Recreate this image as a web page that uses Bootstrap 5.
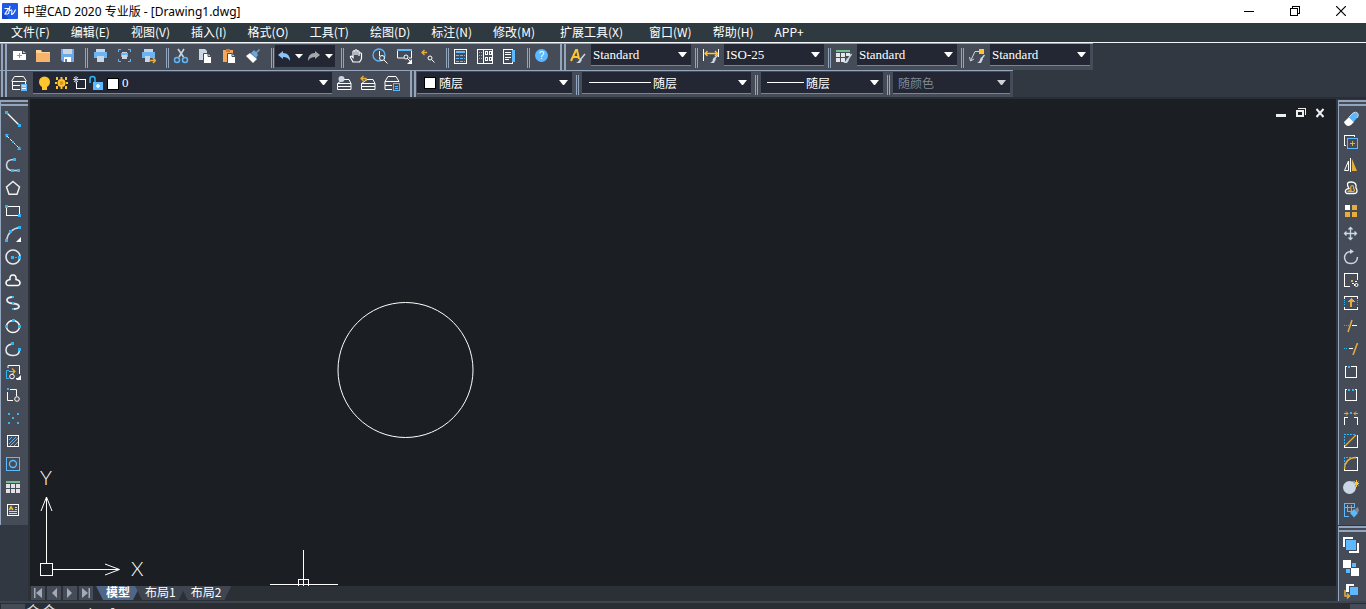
<!DOCTYPE html>
<html lang="zh-CN">
<head>
<meta charset="utf-8">
<meta name="viewport" content="width=device-width, initial-scale=1">
<title>中望CAD 2020 专业版 - [Drawing1.dwg]</title>
<link href="https://cdn.jsdelivr.net/npm/bootstrap@5.3.0/dist/css/bootstrap.min.css" rel="stylesheet">
<style>
:root{--panel:#454c57;--shell:#323842;--canvas:#1b1e22;--field:#222733;--rule:#93a5bd;--blue:#33b5f5;--sky:#5cb8ff;--gold:#e8ae3c}
body{font-family:"Noto Sans","Noto Sans CJK SC",sans-serif;font-size:12px;line-height:16px;background:var(--shell);color:#fff}
svg{display:block;flex:none;fill:none}
button{border:0;padding:0;background:none;color:inherit}
.titlebar{height:23px;background:#fff;color:#000;padding:0 2px}
.titlebar h1{font-size:12px;line-height:24px}
.logo{margin:3px 1px 0 0}
.win-btn{width:46px;height:21px;display:flex;align-items:center;justify-content:center}
.menubar{height:20px;background:#2f3940;border-bottom:1px solid #f2f5f7}
.menubar .nav-link{color:#fff;padding:0 10px 0 11px;line-height:18px;font-family:"Noto Sans CJK SC",sans-serif;white-space:nowrap}
.menubar .nav-wide{padding:0 15px}
.dock{height:56px;border-bottom:2px solid #282d36}
.strip{height:27px;background:var(--panel);border-top:1px solid var(--rule);padding-right:3px;width:max-content}
.tool{width:24px;height:24px;display:flex;align-items:center;justify-content:center;flex:none}
.grip{width:6px;height:26px;border:solid var(--rule);border-width:0 2px;flex:none;margin-left:6px}
.grip:first-child{margin-left:1px}
.split{width:3px;height:20px;border:solid var(--rule);border-width:0 1px;flex:none;margin-left:6px}
.split-sm{margin-left:4px}
.history{width:60px;height:22px;background:var(--field);margin:1px 0 0 1px}
.combo{height:22px;background:var(--field);border-bottom:1px solid #7d8490;flex:none;display:flex;align-items:center}
.combo select{appearance:none;border:0;outline:0;flex:1;min-width:0;height:20px;padding:0 20px 0 2px;color:#fff;font:13px/18px "Liberation Serif","Noto Sans CJK SC",serif;background:transparent url("data:image/svg+xml,%3Csvg xmlns='http://www.w3.org/2000/svg' width='9' height='5'%3E%3Cpath d='M0 0h9L5 5H4z' fill='white'/%3E%3C/svg%3E") no-repeat right 4px center}
.combo select:disabled{color:#9a9fa9;opacity:.8}
.combo .cjk{font:12px/18px "Noto Sans CJK SC",sans-serif}
.row-two .combo{margin-top:1px}
.style-box{width:100px;margin-left:1px}
.after{margin-right:1px}
.layer-box{width:299px;margin-left:2px;padding-left:2px}
.color-box{width:155px;margin-left:1px;padding-left:7px}
.type-box{width:169px;margin-left:3px;padding-left:7px}
.weight-box{width:122px;margin-left:3px;padding-left:6px}
.plot-box{width:117px;margin-left:3px;padding-left:3px}
.swatch{width:12px;height:12px;background:#fff;border:1px solid #000;flex:none;margin-right:1px}
.line-sample{height:1px;background:#fff;flex:none;width:62px}
.line-short{width:37px}
.side{background:var(--shell);flex:none;width:30px;padding-top:1px}
.side .bar{background:var(--panel);border-left:1px solid var(--rule);width:28px;padding-bottom:4px}
.side .bar+.bar{margin-top:1px}
.side-left{border-right:2px solid #2c313a}
.side-right{padding-left:2px}
.hgrip{height:6px;border:solid var(--rule);border-width:2px 0;margin-bottom:1px}
.side .tool{height:23px}
.canvas{background:var(--canvas);min-height:0}
.mdi{position:absolute;top:8px;right:10px;gap:9px}
.obj{position:absolute}
.obj-circle{left:307px;top:203px}
.obj-ucs{left:10px;bottom:8px;overflow:visible}
.obj-cross{left:240px;bottom:0}
.axis{font:300 20px "Lato","Liberation Sans",sans-serif;fill:#fff}
.sheets{height:15px;background:#2b2f36}
.sheet-navs{margin:0 1px 0 1px}
.sheet-nav{width:14px;height:14px;background:var(--panel);display:flex;align-items:center;justify-content:center;margin-right:2px}
.sheet-tab{height:14px;line-height:14px;font-size:12px;font-family:"Noto Sans CJK SC",sans-serif;background:#3f4651;clip-path:polygon(0 0,100% 0,calc(100% - 7px) 100%,7px 100%);padding:0 10px 3px;margin-right:-5px;color:#fff;white-space:nowrap;display:flex;align-items:center}
.sheet-tab.active{background:#4f6687;font-weight:700}
.command{height:8px;border-top:2px solid #3d4551;background:#2a2d32;overflow:hidden}
.command .handle{width:24px;height:20px;background:var(--panel);margin:1px 0 0 1px}
.command label{font:16px/22px "Liberation Mono","Noto Sans CJK SC",monospace;color:#d5d8dc;margin-right:4px}
.command input{border:0;background:none;color:#d5d8dc;font:13px/22px "Liberation Mono",monospace;outline:0;padding:0;height:22px}
.scroll-end{width:16px;height:20px;background:var(--panel);margin-top:1px}
.w{stroke:#fff}.b{stroke:var(--blue)}.k{stroke:var(--sky)}.g{stroke:var(--gold)}.l{stroke:#c9d6e6}
.fw{fill:#fff}.fb{fill:var(--blue)}.fk{fill:var(--sky)}.fg{fill:var(--gold)}.fl{fill:#c9d6e6}.fy{fill:#ffc52e}.fp{fill:var(--panel)}
.px{shape-rendering:crispEdges}
</style>
</head>
<body class="vh-100 d-flex flex-column overflow-hidden">
<header class="titlebar d-flex align-items-start flex-shrink-0">
  <svg class="logo" width="16" height="16" viewBox="0 0 16 16"><rect width="16" height="16" rx="1" fill="#1d5be8"/><path d="M0 16V9L7 16z" fill="#1546c8"/><path d="M2.500 5.500H6.500L3 11h3M8 3L6.500 11M8 8q1.500-2.500 2 0l-.5 3.500q2 0 4-5" stroke="#fff" stroke-width="1.100"/></svg>
  <h1 class="m-0 ms-1 fw-normal flex-grow-1">中望CAD 2020 专业版 - [Drawing1.dwg]</h1>
  <button class="win-btn" aria-label="最小化"><svg class="px" width="10" height="10"><path d="M0 5.500h10" stroke="#000"/></svg></button>
  <button class="win-btn" aria-label="还原"><svg class="px" width="10" height="10"><path d="M.5 2.500h7v7h-7zM2.500 2V.5h7v7H8" stroke="#000"/></svg></button>
  <button class="win-btn" aria-label="关闭"><svg width="10" height="10"><path d="M0 0l10 10M10 0L0 10" stroke="#000" stroke-width="1.200"/></svg></button>
</header>
<nav class="menubar nav flex-nowrap flex-shrink-0" aria-label="主菜单">
  <a class="nav-link" href="#">文件(F)</a><a class="nav-link" href="#">编辑(E)</a><a class="nav-link" href="#">视图(V)</a><a class="nav-link" href="#">插入(I)</a><a class="nav-link" href="#">格式(O)</a><a class="nav-link" href="#">工具(T)</a><a class="nav-link" href="#">绘图(D)</a><a class="nav-link" href="#">标注(N)</a><a class="nav-link" href="#">修改(M)</a><a class="nav-link nav-wide" href="#">扩展工具(X)</a><a class="nav-link" href="#">窗口(W)</a><a class="nav-link" href="#">帮助(H)</a><a class="nav-link" href="#">APP+</a>
</nav>
<div class="dock flex-shrink-0">
  <div class="strip d-flex align-items-start" role="toolbar" aria-label="标准">
    <span class="grip"></span>
    <button class="tool" aria-label="新建"><svg width="16" height="16"><path class="fw" d="M2 3h9v3h4v6H2z"/><path class="fl" d="M12 3l3 2h-3z"/><path class="b" d="M8.500 5v5M6 7.500h5"/></svg></button>
    <button class="tool" aria-label="打开"><svg width="16" height="16"><path d="M1 2h5l1 2h8v10H1z" fill="#ffd59b"/><path d="M1 5h14v9H1z" fill="#f9b46c"/></svg></button>
    <button class="tool" aria-label="保存"><svg width="16" height="16"><path d="M2 1h13v13H4l-2-2z" fill="#6fa8e6"/><path class="fl" d="M4 1h9v5H4z"/><path class="fw" d="M5 9h7v5H5z"/><path d="M6 11h2v3H6z" fill="#4a7fc0"/></svg></button>
    <span class="split mt-1"></span>
    <button class="tool" aria-label="打印"><svg width="16" height="16"><path class="fl" d="M4 1h9v3H4z"/><path d="M2 4h13v6H2z" fill="#6db5f2"/><path class="fl" d="M5 8h7v6H5z"/></svg></button>
    <button class="tool" aria-label="打印预览"><svg width="16" height="16"><path class="k" d="M2.500 4V1.500H5M12 1.500h2.500V4M14.500 11v2.500H12M5 13.500H2.500V11"/><path class="fl" d="M6 4h5v2H6z"/><path d="M5 5h7v4H5z" fill="#6db5f2"/><path class="fl" d="M6 7h5v4H6z"/></svg></button>
    <button class="tool" aria-label="发布"><svg width="16" height="16"><path class="fl" d="M4 1h9v3H4z"/><path d="M2 4h13v6H2z" fill="#6db5f2"/><path class="fl" d="M5 8h5v6H5z"/><path class="g" stroke-width="1.500" d="M9 12.500h6M13 10l2.500 2.500L13 15"/></svg></button>
    <span class="split mt-1"></span>
    <button class="tool" aria-label="剪切"><svg width="16" height="16"><path class="l" stroke-width="1.600" d="M5 1l5.500 8M11 1L6 9"/><circle class="k" cx="4" cy="12" r="2.500" stroke-width="1.500"/><circle class="k" cx="12" cy="12" r="2.500" stroke-width="1.500"/></svg></button>
    <button class="tool" aria-label="复制"><svg width="16" height="16"><path class="fl" d="M2 1h6l2 2v9H2z"/><path class="fw" stroke="#454c57" d="M6.500 5.500H11l3.500 3v7h-8z"/><path d="M11 5.500v3h3" stroke="#454c57"/></svg></button>
    <button class="tool" aria-label="粘贴"><svg width="16" height="16"><path d="M2 2h10v12H2z" fill="#f5a65a"/><path d="M5 1h4v3H5z" fill="#c97c35"/><path class="fw" stroke="#454c57" d="M6.500 5.500H11l3.500 3v7h-8z"/><path d="M11 5.500v3h3" stroke="#454c57"/></svg></button>
    <button class="tool" aria-label="特性匹配"><svg width="16" height="16"><path class="fw" d="M1 8l4-3 7 6-4 4z"/><path d="M6 5l3-3 2 2 3-3 1 1-3 3 1 2-2 3z" fill="#6aa9df"/></svg></button>
    <span class="split mt-1"></span>
    <div class="history d-flex align-items-center justify-content-around">
      <button aria-label="撤销"><svg width="14" height="14"><path d="M1 6l5-4v2q7 0 7 8-2-4-7-4v2z" fill="#8cc4f5"/></svg></button>
      <button aria-label="撤销列表"><svg width="8" height="5"><path class="fw" d="M0 0h8L4 4.500z"/></svg></button>
      <button aria-label="重做"><svg width="14" height="14"><path d="M13 6L8 2v2q-7 0-7 8 2-4 7-4v2z" fill="#a5a8ab"/></svg></button>
      <button aria-label="重做列表"><svg width="8" height="5"><path class="fw" d="M0 0h8L4 4.500z"/></svg></button>
    </div>
    <span class="split mt-1"></span>
    <button class="tool" aria-label="平移"><svg width="16" height="16"><path class="w" stroke-width="1.200" d="M5 14L2.500 9.500Q2 8 3.500 8L5 9.500V3.500q1-1.500 2 0V7 2.500q1-1.500 2 0V7 3.500q1-1.500 2 0V8l0-2.500q1.500-1.500 2.500 0V10q0 2-2 4zV14z"/></svg></button>
    <button class="tool" aria-label="实时缩放"><svg width="16" height="16"><circle class="k" cx="7" cy="7" r="6" stroke-width="1.300"/><path class="w" d="M7.500 3v5M12 12l3.500 3.500"/><circle class="w fp" cx="10" cy="10" r="2.500"/></svg></button>
    <button class="tool" aria-label="窗口缩放"><svg width="16" height="16"><path class="fk" d="M1 1h15v2H1z"/><path class="w" d="M1.500 3v7H8M15.500 3v7H13"/><circle class="w fp" cx="10" cy="9" r="2"/><path class="fw" d="M16 11v5h-5z"/><path class="w" d="M11 10l3 3"/></svg></button>
    <button class="tool" aria-label="缩放上一个"><svg width="16" height="16"><path class="g" stroke-width="1.300" d="M2 4.500h5M4.500 2L2 4.500 4.500 7"/><circle class="w" cx="10" cy="10" r="2"/><path class="w" d="M11.500 11.500l3 3"/></svg></button>
    <span class="split mt-1"></span>
    <button class="tool" aria-label="特性"><svg class="px" width="16" height="16"><path class="w" d="M1.500 1.500h12v14h-12z"/><path class="fk" d="M3 3h9v2H3z"/><path class="k" stroke-dasharray="3 1" d="M3 7.500h9M3 10.500h9M3 13.500h9"/></svg></button>
    <button class="tool" aria-label="设计中心"><svg class="px" width="16" height="16"><path class="w" d="M.5 1.500h15v14H.5zM6.500 1v14"/><path class="k" stroke-dasharray="1 1" d="M2 4.500h3M2 7.500h3M2 10.500h3"/><path class="w" d="M8.500 3.500h2v3h-2zM12.500 3.500h2v3h-2zM8.500 9.500h2v3h-2zM12.500 9.500h2v3h-2z"/></svg></button>
    <button class="tool" aria-label="工具选项板"><svg class="px" width="16" height="16"><path class="w" d="M2.500 1.500h9v14h-9z"/><path class="fk" d="M11 2h3v12h-3z"/><path class="w" d="M4 4.500h6M4 6.500h6M4 9.500h6M4 11.500h4"/></svg></button>
    <span class="split mt-1"></span>
    <button class="tool" aria-label="帮助"><svg width="16" height="16"><circle class="fk" cx="7.500" cy="7.500" r="6.500"/><text x="7.500" y="11" text-anchor="middle" font-size="10" fill="#fff" font-family="Liberation Sans">?</text></svg></button>
    <span class="grip"></span>
    <button class="tool" aria-label="文字样式"><svg width="16" height="16"><path stroke="#ffc52e" stroke-width="2" d="M1 13L6 2h1l2 9M2.500 9H8"/><path class="l" stroke-width="1.500" d="M15 6l-5 6"/><path class="fl" d="M10 10l2 2-2 3H6q3-1 4-5z"/></svg></button>
    <div class="combo style-box"><select aria-label="文字样式"><option>Standard</option></select></div>
    <span class="split split-sm after mt-1"></span>
    <button class="tool" aria-label="标注样式"><svg width="16" height="16"><path class="w" d="M.5 1v12M15.500 1v8"/><path stroke="#ffc52e" stroke-width="1.300" d="M2 5.500h12M4.500 3L2 5.500 4.500 8M12 3l2.500 2.500L12 8"/><path class="l" stroke-width="1.500" d="M15 7l-5 5"/><path class="fl" d="M11 9l2 2-2 4H7q3-1 4-6z"/></svg></button>
    <div class="combo style-box"><select aria-label="标注样式"><option>ISO-25</option></select></div>
    <span class="split split-sm after mt-1"></span>
    <button class="tool" aria-label="表格样式"><svg width="16" height="16"><path d="M0 2h14v2H0z" fill="#6fc08a"/><path fill="#e4e6ea" d="M0 5h4v4H0zM5 5h4v4H5zM10 5h4v3h-4zM0 10h4v4H0zM5 10h4v4H5z"/><path class="l" stroke-width="1.500" d="M15.500 6l-4 6"/><path class="fl" d="M11 10l2 2-2 3H7q3-1 4-5z"/></svg></button>
    <div class="combo style-box"><select aria-label="表格样式"><option>Standard</option></select></div>
    <span class="split split-sm after mt-1"></span>
    <button class="tool" aria-label="引线样式"><svg width="16" height="16"><path class="fy" d="M10 1h5v5h-5z"/><path class="l" d="M10 3.500H6L1.500 13M.5 9l1 4 3.500-2"/><path class="l" stroke-width="1.500" d="M15.500 7l-4 5"/><path class="fl" d="M12 9l2 2-2 4H8q3-1 4-6z"/></svg></button>
    <div class="combo style-box"><select aria-label="引线样式"><option>Standard</option></select></div>
  </div>
  <div class="strip row-two d-flex align-items-start" role="toolbar" aria-label="图层和特性">
    <span class="grip"></span>
    <button class="tool" aria-label="图层特性管理器"><svg width="16" height="16"><path class="w" d="M3.500 1.500h9l2.500 4v1H1v-1zM1.500 7v3.500H9M14.500 7v2M1.500 10.500v4H9"/><path class="fk" d="M10 9h6v7h-6z"/><path class="w" d="M11 11h4M11 13.500h4"/></svg></button>
    <div class="combo layer-box">
      <svg width="85" height="18"><circle class="fy" cx="9.500" cy="8" r="5.500"/><path class="fy" d="M7 13h5v3H7z"/><circle class="fy" cx="26.500" cy="9" r="4"/><path class="fy" d="M25.500 3h2v2h-2zM25.500 13h2v2h-2zM20 8h2v2h-2zM31 8h2v2h-2zM21 3h2v3h-2zM30 3h2v3h-2zM21 12h2v3h-2zM30 12h2v3h-2z"/><circle cx="26.500" cy="9" r="2" fill="#e0941f"/><path class="w px" d="M41.500 8v6.500h9v-9H44"/><path class="l" d="M41 2v7M38 5.500h7M39 3l4 5M43 3l-4 5"/><path stroke="#33b5f5" stroke-width="1.500" d="M55 9V5q0-2.500 2.500-2.500T60 5v3"/><path class="fk" d="M58 8h10v8H58z"/><path class="w" stroke-width="1.500" d="M63 10v4M61 12h4"/><path class="px fw" stroke="#000" d="M72.500 4.500h11v11h-11z"/></svg>
      <select aria-label="图层"><option>0</option></select>
    </div>
    <button class="tool" aria-label="图层置为当前"><svg width="16" height="16"><path class="w" d="M7 4.500h6l2 4H1.500zM1.500 8.500v3H15M1.500 11.500v3H15v-6"/><circle class="fl" cx="5.500" cy="4" r="3"/></svg></button>
    <button class="tool" aria-label="上一个图层"><svg width="16" height="16"><path class="w" d="M7 4.500h6l2 4H1.500zM1.500 8.500v3H15M1.500 11.500v3H15v-6"/><path class="g" stroke-width="1.300" d="M1 3.500h5V6M3.500 1L1 3.500 3.500 6"/></svg></button>
    <button class="tool" aria-label="图层状态"><svg width="16" height="16"><path class="w" d="M4 1.500h8l3 5H1zM1 6.500v4h7M1 10.500v4h7"/><path class="k px fp" d="M9.500 8.500h6v7h-6zM11 11h3M11 13.500h3"/></svg></button>
    <span class="grip"></span>
    <div class="combo color-box"><span class="swatch"></span><select class="cjk" aria-label="颜色"><option>随层</option></select></div>
    <span class="split split-sm mt-1"></span>
    <div class="combo type-box"><span class="line-sample"></span><select class="cjk" aria-label="线型"><option>随层</option></select></div>
    <span class="split split-sm mt-1"></span>
    <div class="combo weight-box"><span class="line-sample line-short"></span><select class="cjk" aria-label="线宽"><option>随层</option></select></div>
    <span class="split split-sm mt-1"></span>
    <div class="combo plot-box"><select class="cjk" disabled aria-label="打印样式"><option>随颜色</option></select></div>
  </div>
</div>
<main class="d-flex flex-grow-1 overflow-hidden">
  <aside class="side side-left">
    <div class="bar" role="toolbar" aria-label="绘图">
      <div class="hgrip"></div>
      <button class="tool" aria-label="直线"><svg width="16" height="16"><path class="w" stroke-width="1.300" d="M1 1l14 14"/><path class="fb" d="M0 0h3v3H0zM13 13h3v3h-3z"/></svg></button>
      <button class="tool" aria-label="构造线"><svg width="16" height="16"><path class="w" stroke-dasharray="3 1.500" d="M2 2l12 12"/><path class="fb" d="M0 0h4L1 4zM16 16h-4l3-4zM7 7h2v2H7z"/></svg></button>
      <button class="tool" aria-label="多段线"><svg width="16" height="16"><path class="l" stroke-width="1.600" d="M9 2.500Q1.500 2.500 1.500 8T8 13.500h6"/><path class="fb" d="M8 1h3v3H8zM6 12h3v3H6zM12 12h3v3h-3z"/></svg></button>
      <button class="tool" aria-label="正多边形"><svg width="16" height="16"><path stroke="#eee" stroke-width="1.500" d="M8 1.500L14.500 7 12 14.200H4L1.500 7z"/></svg></button>
      <button class="tool" aria-label="矩形"><svg class="px" width="16" height="16"><path class="w" d="M1.500 3.500h13v9h-13z"/><path class="fb" d="M0 2h3v3H0zM13 11h3v3h-3z"/></svg></button>
      <button class="tool" aria-label="圆弧"><svg width="16" height="16"><path class="l" stroke-width="1.500" d="M1.500 15Q3 3 15 1.500"/><path class="fb" d="M0 13h3v3H0zM4 4h3v3H4zM13 0h3v3h-3z"/><path class="fw" d="M16 11v5h-5z"/></svg></button>
      <button class="tool" aria-label="圆"><svg width="16" height="16"><circle cx="8" cy="8" r="7" stroke="#e6ebf2" stroke-width="1.600"/><path class="fb" d="M6 7h3v3H6zM10 8h2v1h-2zM13 7h3v3h-3z"/></svg></button>
      <button class="tool" aria-label="修订云线"><svg width="16" height="16"><path class="w" stroke-width="1.500" d="M3 13.500Q.7 13 1 10.500 1.500 8 5 7.500 4.500 3 8 3t3 4.500Q14.500 8 15 10.500q.3 2.500-2 3z"/></svg></button>
      <button class="tool" aria-label="样条曲线"><svg width="16" height="16"><path stroke="#e6ebf2" stroke-width="1.800" d="M8 2Q2 2 2 5t6 3.500q6 .5 6 3T8 14"/><path class="fb" d="M7 1h2v2H7zM7 7h2v2H7zM7 13h2v2H7z"/></svg></button>
      <button class="tool" aria-label="椭圆"><svg width="16" height="16"><ellipse class="w" cx="8" cy="8.500" rx="6.500" ry="6" stroke-width="1.500"/><path class="fb" d="M7 1h3v3H7zM0 7h3v3H0zM13 7h3v3h-3z"/></svg></button>
      <button class="tool" aria-label="椭圆弧"><svg width="16" height="16"><path stroke="#e6ebf2" stroke-width="1.500" d="M7 3Q1 4 1 9t6.500 5.500T14.500 9"/><path class="fb" d="M6 1h3v3H6zM13 7h3v3h-3z"/></svg></button>
      <button class="tool" aria-label="插入块"><svg width="16" height="16"><path class="w" d="M3 4V1.500h11.500V10M11 14.500h2"/><path class="b" d="M4 6.500H1.500v8H4"/><path class="g" stroke-width="1.200" d="M4 7.500h6M7 4.500l3 3-3 3"/><circle class="w" cx="7" cy="12.500" r="2.300"/><path class="fw" d="M16 11v5h-5z"/></svg></button>
      <button class="tool" aria-label="创建块"><svg width="16" height="16"><path class="w" d="M5 2.500h6.500V9M2.500 5v8.500H8"/><path class="fb" d="M2 1h2v2H2z"/><circle class="w" cx="12" cy="12" r="2.300"/></svg></button>
      <button class="tool" aria-label="点"><svg class="px" width="16" height="16"><path class="fb" d="M3 3h2v2H3zM12 3h2v2h-2zM7 7h2v2H7zM3 12h2v2H3zM12 12h2v2h-2z"/></svg></button>
      <button class="tool" aria-label="图案填充"><svg width="16" height="16"><path class="w px" d="M2.500 2.500h11v11h-11z"/><path class="k" d="M4 7l3-3M4 11l7-7M5 13l8-8M9 13l4-4"/></svg></button>
      <button class="tool" aria-label="面域"><svg width="16" height="16"><path class="k px" d="M1.500 1.500h13v13h-13z"/><circle class="k" cx="8" cy="8" r="3.500" stroke-width="1.400"/></svg></button>
      <button class="tool" aria-label="表格"><svg class="px" width="16" height="16"><path d="M1 2h14v2H1z" fill="#6fc08a"/><path fill="#e4e0e8" d="M1 5h4v4H1zM6 5h4v4H6zM11 5h4v4h-4zM1 10h4v4H1zM6 10h4v4H6zM11 10h4v4h-4z"/></svg></button>
      <button class="tool" aria-label="多行文字"><svg width="16" height="16"><path class="w px" d="M2.500 2.500h11v11h-11z"/><path stroke="#ffc52e" stroke-width="1.200" d="M4 8l2-3.500L8 8M4.500 7h3"/><path class="l" d="M10 5.500h2M10 7.500h2M4 9.500h8M4 11.500h8"/></svg></button>
    </div>
  </aside>
  <section class="d-flex flex-column flex-grow-1 overflow-hidden">
    <div class="canvas flex-grow-1 position-relative overflow-hidden">
      <div class="mdi d-flex">
        <button aria-label="最小化图纸"><svg class="px" width="11" height="12"><path d="M1 7h10v3H1z" fill="#eee"/></svg></button>
        <button aria-label="还原图纸"><svg class="px" width="11" height="12"><path d="M2 4h6v5H2z" stroke="#eee" stroke-width="2"/><path d="M3 1.500h7.500V8" stroke="#eee"/></svg></button>
        <button aria-label="关闭图纸"><svg width="11" height="12"><path d="M1.500 2l7 8M8.500 2l-7 8" stroke="#eee" stroke-width="2"/></svg></button>
      </div>
      <svg class="obj obj-circle" width="137" height="137"><circle cx="68.500" cy="68" r="67.500" stroke="#fff"/></svg>
      <svg class="obj obj-ucs" width="110" height="110"><path class="w px" d="M.5 107.500v-12h12v12zM6.500 95V29M13 101.500h66"/><path class="w" d="M6.500 29L1 43M6.500 29l5.500 14M79.500 101.500L65 96M79.500 101.500L65 107"/><text class="axis" x="0" y="17">Y</text><text class="axis" x="91" y="108">X</text></svg>
      <svg class="obj obj-cross px" width="68" height="36"><path class="w" d="M0 34.500h68M33.500 0v36M28.500 36v-6.500h10V36"/></svg>
    </div>
    <div class="sheets d-flex align-items-start flex-shrink-0" role="tablist">
      <span class="sheet-navs d-flex">
        <button class="sheet-nav" aria-label="第一个"><svg width="10" height="10"><path d="M9 0v10L3 5zM1 0h1.500v10H1z" fill="#a4abb7"/></svg></button>
        <button class="sheet-nav" aria-label="上一个"><svg width="10" height="10"><path d="M8 0v10L3 5z" fill="#a4abb7"/></svg></button>
        <button class="sheet-nav" aria-label="下一个"><svg width="10" height="10"><path d="M2 0v10l5-5z" fill="#a4abb7"/></svg></button>
        <button class="sheet-nav" aria-label="最后一个"><svg width="10" height="10"><path d="M1 0v10l6-5zM7.500 0H9v10H7.500z" fill="#a4abb7"/></svg></button>
      </span>
      <button class="sheet-tab active" role="tab" aria-selected="true">模型</button>
      <button class="sheet-tab" role="tab">布局1</button>
      <button class="sheet-tab" role="tab">布局2</button>
    </div>
  </section>
  <aside class="side side-right">
    <div class="bar" role="toolbar" aria-label="修改">
      <div class="hgrip"></div>
      <button class="tool" aria-label="删除"><svg width="16" height="16"><path class="fw" d="M1 11l5-5 5 5-3 3q-3 2-5 0t-2-3z"/><path class="fk" d="M6 6l4-4q3-2 5 1 1 2-1 4l-3.500 4z"/><path class="l" d="M6 6l4-4q3-2 5 .5 1 2.500-1 4.500"/></svg></button>
      <button class="tool" aria-label="复制对象"><svg class="px" width="16" height="16"><path class="w" d="M3 11.500H1.500v-10h10V3"/><path class="k" d="M4.500 4.500h10v10h-10z"/><path class="g" d="M9.500 7v5M7 9.500h5"/></svg></button>
      <button class="tool" aria-label="镜像"><svg width="16" height="16"><path class="w" d="M5.500 4v9.500h-4zM7.500 1v14"/><path class="fg" d="M9 2l5 12H9z"/></svg></button>
      <button class="tool" aria-label="偏移"><svg width="16" height="16"><path class="w" stroke-width="1.300" d="M4 13.500Q2 13 2.500 10.500 3 9 6 8.500 2 2 8 2q6 0 5 6 1 1 1 3 0 2.500-3 2.500z"/><path class="g" stroke-width="1.200" d="M5 11.500q0-1 3-1-1-5 1-5t1.500 3q2 2 0 3z"/></svg></button>
      <button class="tool" aria-label="阵列"><svg class="px" width="16" height="16"><path class="fw" d="M2 2h5v5H2z"/><path class="fg" d="M9 2h5v5H9zM2 9h5v5H2zM9 9h5v5H9z"/></svg></button>
      <button class="tool" aria-label="移动"><svg width="16" height="16"><path class="l" stroke-width="1.300" d="M7.500 1.500v12M1.500 7.500h12M5.500 3.500l2-2 2 2M5.500 11.500l2 2 2-2M3.500 5.500l-2 2 2 2M11.500 5.500l2 2-2 2"/></svg></button>
      <button class="tool" aria-label="旋转"><svg width="16" height="16"><path class="l" stroke-width="1.500" d="M8 2.500q-6 .5-6.500 6 .5 6 6.500 6t6.500-6.500"/><path class="fl" d="M7 0l4 2.500L7 5z"/></svg></button>
      <button class="tool" aria-label="缩放"><svg width="16" height="16"><path class="w px" d="M7 14.500H1.500v-13h13V8"/><path class="fg" d="M8 8h2v2H8z"/><path class="w px" stroke-dasharray="2 1" d="M9 11.500h2.500V15M12 9.500h3"/><circle class="w" cx="13.500" cy="13" r="1.500"/></svg></button>
      <button class="tool" aria-label="拉伸"><svg class="px" width="16" height="16"><path class="w" d="M1.500 4V1.500h13V4M1.500 12v2.500h13V12"/><path class="b" stroke-dasharray="1 1" d="M1.500 5v6M14.500 5v6"/><path class="fg" d="M8 3l4 4H9v5H7V7H4z"/></svg></button>
      <button class="tool" aria-label="修剪"><svg width="16" height="16"><path class="g" stroke-width="1.500" d="M9 2L5 14"/><path class="b" stroke-dasharray="1 1" d="M1 7.500h5"/><path class="w" d="M9 7.500h5"/></svg></button>
      <button class="tool" aria-label="延伸"><svg width="16" height="16"><path class="g" stroke-width="1.500" d="M14.500 2L10 14"/><path class="b" stroke-dasharray="1 1" d="M1 7.500h4"/><path class="w" d="M6 7.500h4"/></svg></button>
      <button class="tool" aria-label="打断于点"><svg class="px" width="16" height="16"><path class="w" d="M4 2.500H2.500v11h11v-11H8"/><path class="fb" d="M5 2h2v2H5z"/></svg></button>
      <button class="tool" aria-label="打断"><svg class="px" width="16" height="16"><path class="w" d="M4 2.500H2.500v11h11v-11H12"/><path class="fb" d="M5 2h2v2H5zM9 2h2v2H9z"/></svg></button>
      <button class="tool" aria-label="合并"><svg width="16" height="16"><path class="g" d="M1 3.500h4M3 1.500l2 2-2 2M15 3.500h-4M13 1.500l-2 2 2 2"/><path class="fb px" d="M7 2h2v2H7z"/><path class="w px" d="M1.500 15V7.500H5M11 7.500h3.500V15"/></svg></button>
      <button class="tool" aria-label="倒角"><svg width="16" height="16"><path class="b px" stroke-dasharray="2 1" d="M1.500 11V1.500H12"/><path class="w px" d="M1.500 12v2.500h13v-13"/><path class="g" stroke-width="1.200" d="M2 13L13 2"/></svg></button>
      <button class="tool" aria-label="圆角"><svg width="16" height="16"><path class="b px" stroke-dasharray="2 1" d="M1.500 9V1.500H8"/><path class="w px" d="M1.500 12v2.500h13v-13H12"/><path class="g" stroke-width="1.400" d="M1.500 13Q2 2 13 1.500"/></svg></button>
      <button class="tool" aria-label="分解"><svg width="16" height="16"><circle class="fl" cx="6.500" cy="8.500" r="6.500"/><path class="l" d="M9 3h3"/><path stroke="#ffc52e" d="M13.500 1v7M10.500 4.500h5.500M11.500 2.500l4 4M15.500 2.500l-4 4"/></svg></button>
      <button class="tool" aria-label="块编辑"><svg width="16" height="16"><path class="k px" d="M1.500 1.500h10v4h-10zM1.500 5.500v9H6M4.500 3v6h4V3"/><path class="fk" d="M7 11l4-4 4 4-4 4.500z"/><path fill="#858b94" d="M12 7l3-2 1 4-2 2z"/></svg></button>
    </div>
    <div class="bar" role="toolbar" aria-label="绘图次序">
      <div class="hgrip"></div>
      <button class="tool" aria-label="前置"><svg class="px" width="16" height="16"><path class="fw" d="M0 0h10v2H2v8H0zM14 6h2v10H6v-2h8z"/><path class="fk" d="M3 3h10v10H3z"/></svg></button>
      <button class="tool" aria-label="后置"><svg class="px" width="16" height="16"><path class="fw" d="M0 0h8v8H0zM8 8h8v8H8z"/><path class="fk" d="M9 3h4v4H9zM3 9h4v4H3z"/></svg></button>
      <button class="tool" aria-label="置于对象之上"><svg width="16" height="16"><path class="fw" d="M3 1h8v2H6v6H3z"/><path class="fk" d="M7 4h8v8H7z"/><path class="g" stroke-width="1.500" d="M2 7v6h4M4 10.500L6.500 13 4 15.500"/></svg></button>
    </div>
  </aside>
</main>
<footer class="command d-flex align-items-start flex-shrink-0">
  <span class="handle"></span>
  <label for="cmd">命令:</label><input id="cmd" class="flex-grow-1" value="_circle">
  <span class="scroll-end"></span>
</footer>
<script src="https://cdn.jsdelivr.net/npm/bootstrap@5.3.0/dist/js/bootstrap.bundle.min.js"></script>
</body>
</html>
